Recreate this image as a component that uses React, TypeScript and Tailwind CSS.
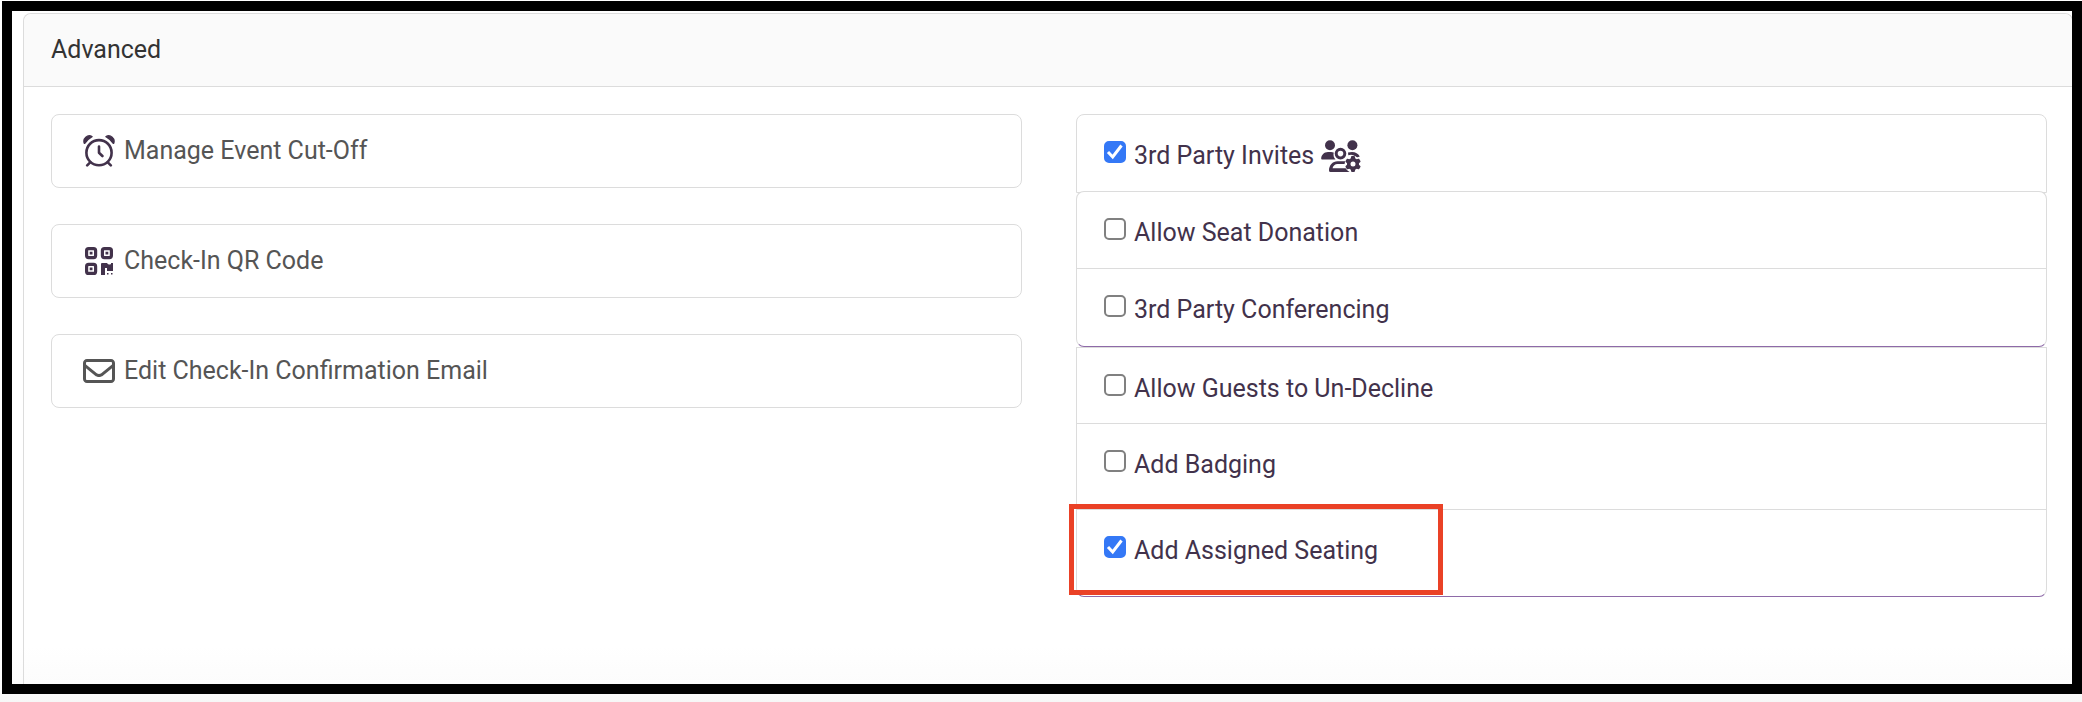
import { ReactNode, useState } from "react";
import { FaGear } from "react-icons/fa6";

function AlarmClock() {
  return (
    <svg viewBox="0 0 32 32" className="size-8 text-[#42324b]" fill="none" stroke="currentColor" strokeWidth="2.6" strokeLinecap="round" strokeLinejoin="round" aria-hidden="true">
      <circle cx="16" cy="17.7" r="12.6" />
      <path d="M16 11.5v6.2l3.4 3.3M7.2 27.4 4.2 30.4M24.8 27.4l3 3" />
      <path d="M1.3 8.2C-.4 3.4 4.6-.8 9 1.6Q4.6 4 1.9 8.2ZM30.7 8.2C32.4 3.4 27.4-.8 23 1.6Q27.4 4 30.1 8.2Z" fill="currentColor" strokeWidth="1.4" />
    </svg>
  );
}

function QrCode() {
  return (
    <svg viewBox="0 0 28 28" className="mx-0.5 size-7 text-[#42324b]" fill="none" stroke="currentColor" strokeWidth="3.2" aria-hidden="true">
      <rect x="1.6" y="1.6" width="9" height="9" rx="2" />
      <rect x="17.4" y="1.6" width="9" height="9" rx="2" />
      <rect x="1.6" y="17.4" width="9" height="9" rx="2" />
      <path fill="currentColor" stroke="none" d="M4.7 4.7h2.8v2.8H4.700zM20.500 4.700h2.800v2.800h-2.800zM4.700 20.500h2.800v2.800H4.700zM17 16h5q1.500 2.500 4 1v-1h2v8h-6v-3h-2v7h-4V17a1 1 0 0 1 1-1zM22 26h1.500v1.500H22zM26 26h1.500v1.500H26z" />
    </svg>
  );
}

function Envelope() {
  return (
    <svg viewBox="0 0 512 512" className="size-8" fill="currentColor" aria-hidden="true">
      <path d="M64 112c-8.800 0-16 7.200-16 16v22.100L220.500 291.700c20.700 17 50.400 17 71.100 0L464 150.100V128c0-8.800-7.200-16-16-16H64zM48 212.200V384c0 8.800 7.200 16 16 16H448c8.800 0 16-7.200 16-16V212.200L322 328.800c-38.400 31.500-93.700 31.500-132 0L48 212.200zM0 128C0 92.700 28.700 64 64 64H448c35.300 0 64 28.700 64 64V384c0 35.300-28.700 64-64 64H64c-35.300 0-64-28.700-64-64V128z" />
    </svg>
  );
}

function PeopleGear() {
  return (
    <svg viewBox="0 0 40 32" className="h-8 w-10" fill="currentColor" aria-hidden="true">
      <circle cx="9" cy="5.3" r="5" />
      <circle cx="31.4" cy="5.3" r="5" />
      <path d="M.2 18.800C.2 14.800 3.200 12 7 12h3c1 0 1.900.2 2.700.5-.6 2.700.1 5.300 1.800 7.100H1a.8.800 0 0 1-.8-.8Z" />
      <path d="M27 12.500Q29 12 31 12c3.500 0 6.300 1.500 7.800 4.500l-3 1q-4-4-8.500-2.200Z" />
      <circle cx="19.5" cy="13.6" r="4.3" fill="none" stroke="currentColor" strokeWidth="3" />
      <path d="M8 30.500c0-5 3.500-9.200 8.500-9.200H24v2.800h-7.500c-2.500 0-4.300 1.700-5 4.200H25l4 3.700H9.500A1.500 1.500 0 0 1 8 30.500Z" />
      <circle cx="31.7" cy="24.2" r="8.2" fill="#fff" />
      <FaGear x={24} y={16} size={16} />
    </svg>
  );
}

function Action({ icon, children }: { icon: ReactNode; children: ReactNode }) {
  return (
    <button type="button" className="flex h-[74px] items-center gap-[9px] rounded-lg border border-[#dcdcdc] px-[31px] text-left text-[#555]">
      {icon}
      {children}
    </button>
  );
}

function Option({ label, checked = false, icon, className = "" }: { label: string; checked?: boolean; icon?: ReactNode; className?: string }) {
  const [on, setOn] = useState(checked);
  return (
    <div className={"px-[27px] pt-[23px] " + className}>
      <label className="flex w-fit items-start gap-2">
        <span className="mt-[3px] grid size-[22px]">
          <input
            type="checkbox"
            checked={on}
            onChange={(e) => setOn(e.target.checked)}
            className="peer col-start-1 row-start-1 size-[22px] appearance-none rounded-[5px] border-2 border-[#808080] bg-white checked:border-[#3478f6] checked:bg-[#3478f6]"
          />
          <svg viewBox="0 0 22 22" className="pointer-events-none col-start-1 row-start-1 hidden size-[22px] peer-checked:block" fill="none" stroke="#fff" strokeWidth="3" aria-hidden="true">
            <path d="M4 11l4.700 5L17.500 4.500" />
          </svg>
        </span>
        <span className="flex items-center gap-[7px]">
          {label}
          {icon}
        </span>
      </label>
    </div>
  );
}

export default function App() {
  return (
    <div className="flex min-h-screen flex-col bg-[linear-gradient(to_top,#f7f7f7,#fcfcfc_18px,#fff_56px)] pt-px pb-2 pl-0.5 font-['Roboto',sans-serif] text-[25px] leading-9">
      <main className="flex grow flex-col overflow-hidden border-10 border-black pt-0.5 pl-[11px]">
        <section className="-mr-px grow rounded-t-lg border border-b-0 border-[#dcdcdc]">
          <h2 className="rounded-t-lg border-b border-[#dcdcdc] bg-[#fafafa] px-[27px] py-[18px] text-[#333]">Advanced</h2>
          <div className="grid grid-cols-2 gap-[54px] pt-[27px] pr-[25px] pb-12 pl-[27px]">
            <div className="flex flex-col gap-9">
              <Action icon={<AlarmClock />}>Manage Event Cut-Off</Action>
              <Action icon={<QrCode />}>Check-In QR Code</Action>
              <Action icon={<Envelope />}>Edit Check-In Confirmation Email</Action>
            </div>
            <div className="text-[#42324b]">
              <div className="rounded-t-lg border border-[#dcdcdc]">
                <Option label="3rd Party Invites" checked icon={<PeopleGear />} className="h-[77px]" />
              </div>
              <div className="-mt-0.5 rounded-lg border border-[#dcdcdc] border-b-[#8e6aa8] bg-white">
                <Option label="Allow Seat Donation" className="h-[76px]" />
                <Option label="3rd Party Conferencing" className="h-[78px] border-t border-[#dcdcdc]" />
              </div>
              <div className="rounded-b-lg border border-[#dcdcdc] border-b-[#8e6aa8]">
                <Option label="Allow Guests to Un-Decline" className="h-[75px]" />
                <Option label="Add Badging" className="h-[86px] border-t border-[#dcdcdc]" />
                <div className="relative">
                  <Option label="Add Assigned Seating" checked className="h-[87px] border-t border-[#dcdcdc]" />
                  <div className="pointer-events-none absolute -top-[5px] -left-2 h-[91px] w-[374px] border-5 border-[#ea4126]" />
                </div>
              </div>
            </div>
          </div>
        </section>
      </main>
    </div>
  );
}
